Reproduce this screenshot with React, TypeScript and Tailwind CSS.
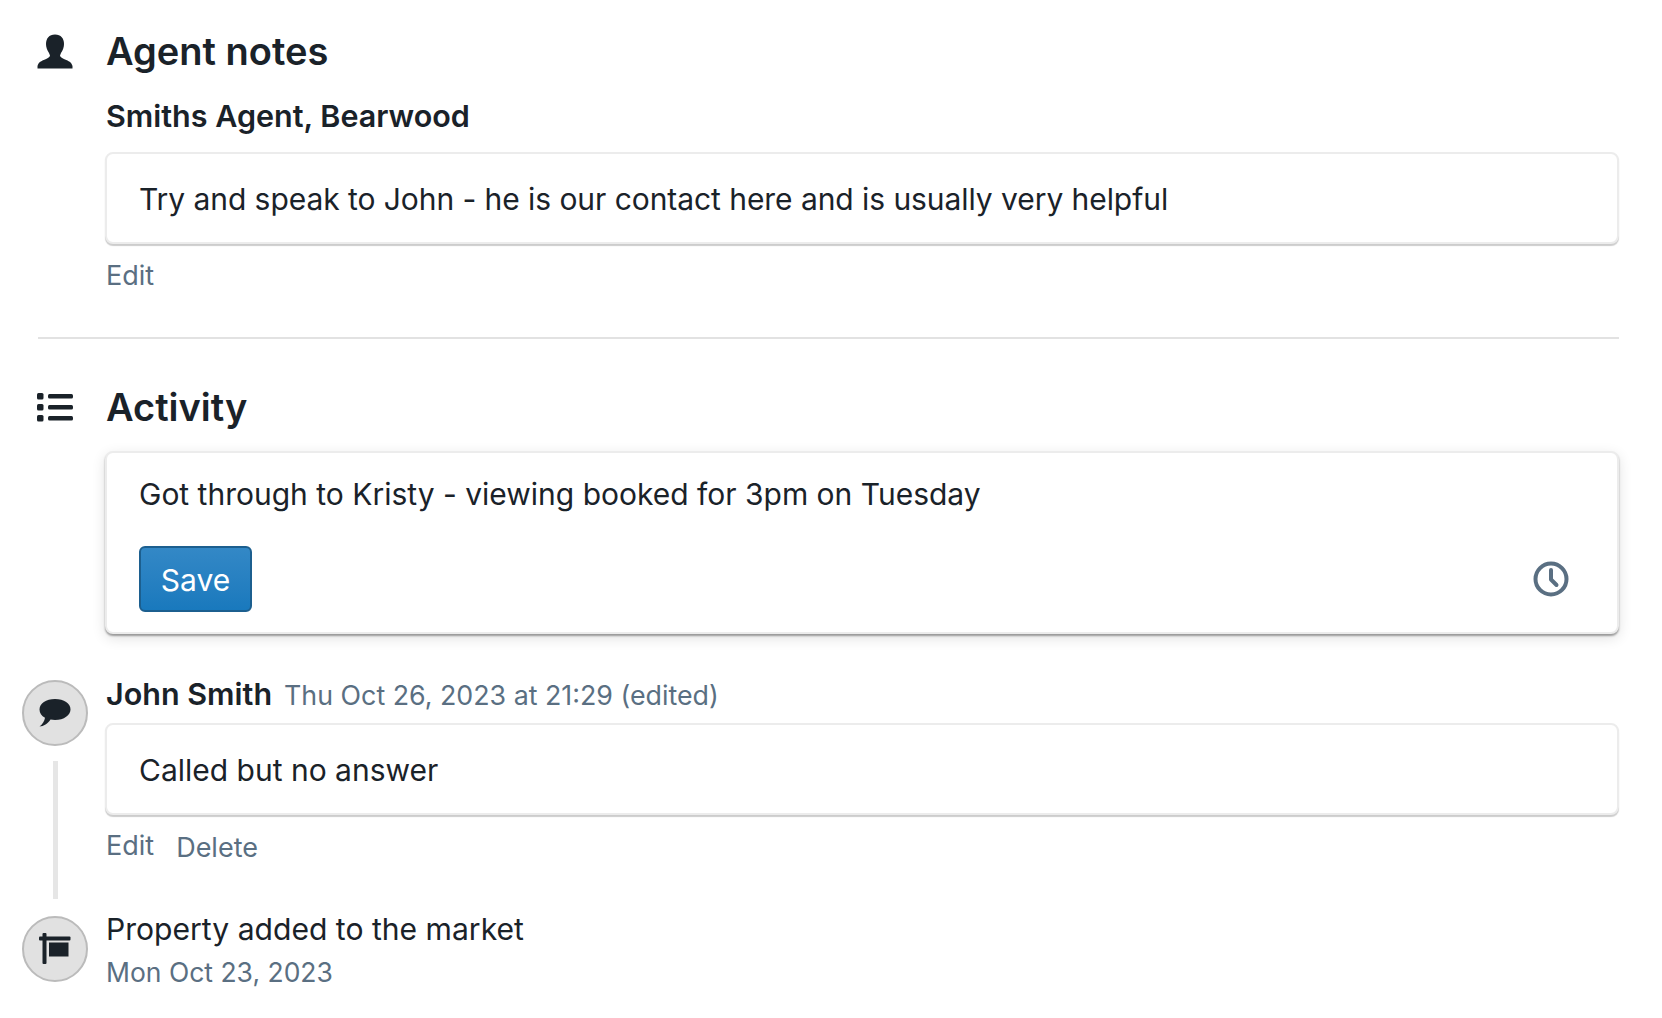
import React from "react";

const dark = "#1a2229";

function PersonIcon() {
  return (
    <svg viewBox="0 0 36 36" className="w-9 h-9" fill={dark}>
      <path d="M18 .5C12 .5 9 4.500 9 10c0 3 1 6 3 9l1 2.500c0 1.500-2 2.500-5 4-3.500 1.500-6.500 2.500-7.500 6.500v2.500h35V32c-1-4-4-5-7.500-6.500-3-1.500-5-2.500-5-4l1-2.500c2-3 3-6 3-9 0-5.500-3-9.500-9-9.500z" />
    </svg>
  );
}

function ListIcon() {
  return (
    <svg viewBox="0 0 36 30" className="w-9 h-[30px]" fill={dark}>
      <rect x="0" y="1" width="6.500" height="6.500" rx="1.500" />
      <rect x="0" y="12" width="6.500" height="6.500" rx="1.500" />
      <rect x="0" y="23" width="6.500" height="6.500" rx="1.500" />
      <rect x="11" y="2" width="25" height="4.500" rx="1.500" />
      <rect x="11" y="13" width="25" height="4.500" rx="1.500" />
      <rect x="11" y="24" width="25" height="4.500" rx="1.500" />
    </svg>
  );
}

function BubbleIcon() {
  return (
    <svg viewBox="0 0 32 28" className="w-8 h-7" fill={dark}>
      <path d="M16 0C7 0 .5 4.500 .5 10.500.5 14 2.500 17 6 18.800c-.5 3.200-2.500 6.700-5.500 8.700 4 0 8.500-3 11-7 1.500.3 3 .5 4.500.5 9 0 15.500-5 15.500-10.500C31.500 4.500 25 0 16 0z" />
    </svg>
  );
}

function SignIcon() {
  return (
    <svg viewBox="0 0 32 32" className="w-8 h-8" fill={dark}>
      <rect x="3.500" y="0" width="4" height="31" rx="1" />
      <rect x="0" y="3.500" width="31.500" height="4" rx="1" />
      <rect x="10" y="9.500" width="19.500" height="14" />
    </svg>
  );
}

function ClockIcon() {
  return (
    <svg viewBox="0 0 36 36" className="w-9 h-9" fill="none" stroke="#5a6f82" strokeWidth="4" strokeLinecap="round" strokeLinejoin="round">
      <circle cx="18" cy="18" r="15.500" />
      <path d="M18 9v9.500l5.500 5.500" />
    </svg>
  );
}

function NoteCard({ children }: { children: React.ReactNode }) {
  return (
    <div className="h-[92px] flex items-center px-[32px] pt-[2px] bg-white rounded-[8px] border-2 border-[#ececec] shadow-[0_2px_1px_rgba(0,0,0,0.2)] text-[30px] text-[#1a2229]">
      {children}
    </div>
  );
}

function Circle({ children }: { children: React.ReactNode }) {
  return (
    <div className="w-[66px] h-[66px] rounded-full bg-[#e1e1e1] border-2 border-[#bbbbbb] flex items-center justify-center">
      {children}
    </div>
  );
}

export default function App() {
  return (
    <div className="w-[1662px] h-[1018px] overflow-hidden bg-white pt-[29px] pr-[43px] font-['Inter',sans-serif] text-[#1a2229]">
      <div className="flex">
        <div className="w-[106px] shrink-0 pl-[37px] pt-[5px]">
          <PersonIcon />
        </div>
        <h2 className="text-[38px] leading-[44px] font-semibold">Agent notes</h2>
      </div>
      <div className="ml-[105px]">
        <div className="pl-[1px] mt-[25px] text-[30.500px] leading-[36px] font-semibold">Smiths Agent, Bearwood</div>
        <div className="mt-[18px]">
          <NoteCard>
            <span className="tracking-[-0.06px]">Try and speak to John - he is our contact here and is usually very helpful</span>
          </NoteCard>
        </div>
        <div className="pl-[1px] mt-[16px] text-[27px] leading-[32px] text-[#5a6f82]">Edit</div>
      </div>
      <div className="ml-[38px] mt-[45px] h-[2px] bg-[#e2e2e2]"></div>
      <div className="flex mt-[46px]">
        <div className="w-[106px] shrink-0 pl-[37px] pt-[7px]">
          <ListIcon />
        </div>
        <h2 className="text-[38px] leading-[44px] font-semibold">Activity</h2>
      </div>
      <div className="ml-[105px] mt-[22px] h-[183px] px-[32px] pt-[22px] bg-white rounded-[8px] border-2 border-[#ececec] shadow-[0_2px_2px_rgba(0,0,0,0.35),0_4px_14px_rgba(0,0,0,0.12)]">
        <div className="text-[30px] leading-[38px]">Got through to Kristy - viewing booked for 3pm on Tuesday</div>
        <div className="mt-[33px] flex items-center justify-between pr-[16px]">
          <button className="w-[113px] h-[66px] pt-[2px] rounded-[6px] border-2 border-[#1c5f8f] bg-gradient-to-b from-[#3388c6] to-[#1979bd] text-white text-[30px]">
            Save
          </button>
          <ClockIcon />
        </div>
      </div>
      <div className="flex mt-[41px]">
        <div className="w-[105px] shrink-0 pl-[22px] pt-[5px]">
          <Circle>
            <BubbleIcon />
          </Circle>
          <div className="ml-[31px] mt-[15px] w-[5px] h-[138px] bg-[#e6e6e6]"></div>
        </div>
        <div className="flex-1">
          <div className="pl-[1px] pt-[1px] flex items-baseline gap-[12px] leading-[36px]">
            <span className="text-[30.500px] font-semibold">John Smith</span>
            <span className="text-[26.800px] text-[#5a6f82]">Thu Oct 26, 2023 at 21:29 (edited)</span>
          </div>
          <div className="mt-[10px]">
            <NoteCard>Called but no answer</NoteCard>
          </div>
          <div className="pl-[1px] mt-[15px] flex items-start gap-[22px] text-[27px] leading-[32px] text-[#5a6f82]">
            <span>Edit</span>
            <span className="mt-[2px]">Delete</span>
          </div>
        </div>
      </div>
      <div className="flex">
        <div className="w-[105px] shrink-0 pl-[22px] pt-[17px]">
          <Circle>
            <SignIcon />
          </Circle>
        </div>
        <div className="flex-1 pl-[1px] pt-[10px]">
          <div className="text-[30.100px] leading-[40px]">Property added to the market</div>
          <div className="mt-[7px] text-[26.500px] leading-[32px] text-[#5a6f82]">Mon Oct 23, 2023</div>
        </div>
      </div>
    </div>
  );
}
